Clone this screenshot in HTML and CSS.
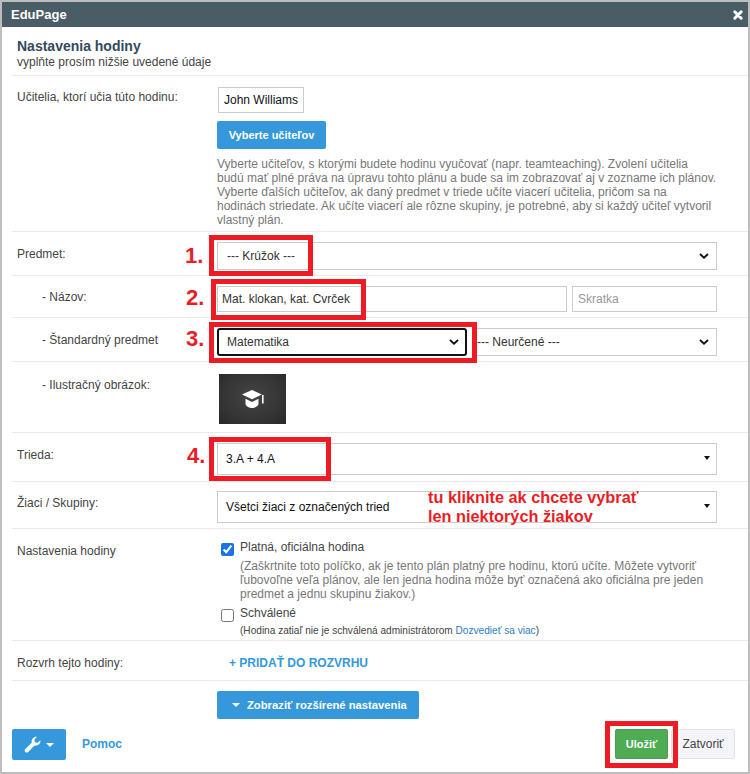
FILE: index.html
```html
<!DOCTYPE html>
<html lang="sk">
<head>
<meta charset="utf-8">
<title>EduPage</title>
<link rel="stylesheet" href="styles.css">
</head>
<body>
<div class="dialog">
  <header class="titlebar">
    <span class="titlebar-name">EduPage</span>
    <svg class="close" viewBox="0 0 10 10" width="10" height="10"><path d="M1.8 1.8 8.2 8.2M8.200 1.800 1.800 8.200" stroke="#fff" stroke-width="3" stroke-linecap="round"/></svg>
  </header>
  <div class="content">
    <div class="heading">
      <h1>Nastavenia hodiny</h1>
      <p>vyplňte prosím nižšie uvedené údaje</p>
    </div>

    <section class="row row-teachers">
      <div class="label">Učitelia, ktorí učia túto hodinu:</div>
      <div class="field">
        <div class="chip">John Williams</div>
        <button class="btn btn-blue btn-teachers" type="button">Vyberte učiteľov</button>
        <p class="hint">Vyberte učiteľov, s ktorými budete hodinu vyučovať (napr. teamteaching). Zvolení učitelia<br>budú mať plné práva na úpravu tohto plánu a bude sa im zobrazovať aj v zozname ich plánov.<br>Vyberte ďalších učiteľov, ak daný predmet v triede učíte viacerí učitelia, pričom sa na<br>hodinách striedate. Ak učíte viacerí ale rôzne skupiny, je potrebné, aby si každý učiteľ vytvoril<br>vlastný plán.</p>
      </div>
    </section>

    <section class="row row-subject">
      <div class="label">Predmet:</div>
      <div class="field">
        <div class="select"><span class="select-text">--- Krúžok ---</span><svg class="chev" viewBox="0 0 10 6"><path d="M1 1l4 3.6L9 1" fill="none" stroke="#111" stroke-width="1.9"/></svg></div>
      </div>
    </section>

    <section class="row row-name">
      <div class="label label-sub">- Názov:</div>
      <div class="field field-pair">
        <div class="input input-name">Mat. klokan, kat. Cvrček</div>
        <div class="input input-short">Skratka</div>
      </div>
    </section>

    <section class="row row-std">
      <div class="label label-sub">- Štandardný predmet</div>
      <div class="field field-pair">
        <div class="select select-focus"><span class="select-text">Matematika</span><svg class="chev" viewBox="0 0 10 6"><path d="M1 1l4 3.6L9 1" fill="none" stroke="#111" stroke-width="1.9"/></svg></div>
        <div class="select select-second"><span class="select-text">--- Neurčené ---</span><svg class="chev" viewBox="0 0 10 6"><path d="M1 1l4 3.6L9 1" fill="none" stroke="#111" stroke-width="1.9"/></svg></div>
      </div>
    </section>

    <section class="row row-image">
      <div class="label label-sub">- Ilustračný obrázok:</div>
      <div class="field">
        <div class="thumb">
          <svg viewBox="0 0 22 18" width="22" height="18"><path d="M10 0 0 4.500l10 4.800 10-4.800z" fill="#fff"/><path d="M3.500 8.800v5.200c0 1.500 3 4 6.500 4s6.500-2.500 6.500-4V8.800L10 12z" fill="#fff"/><path d="M20.800 5v8.500" stroke="#fff" stroke-width="1.600"/></svg>
        </div>
      </div>
    </section>

    <section class="row row-class">
      <div class="label">Trieda:</div>
      <div class="field">
        <div class="select select-tall"><span class="select-text select-text-dark">3.A + 4.A</span><i class="caret"></i></div>
      </div>
    </section>

    <section class="row row-students">
      <div class="label">Žiaci / Skupiny:</div>
      <div class="field">
        <div class="select select-tall"><span class="select-text select-text-dark">Všetci žiaci z označených tried</span><i class="caret"></i></div>
      </div>
    </section>

    <section class="row row-settings">
      <div class="label">Nastavenia hodiny</div>
      <div class="field field-checks">
        <label class="check"><input type="checkbox" checked><span>Platná, oficiálna hodina</span></label>
        <p class="hint hint-check">(Zaškrtnite toto políčko, ak je tento plán platný pre hodinu, ktorú učíte. Môžete vytvoriť<br>ľubovoľne veľa plánov, ale len jedna hodina môže byť označená ako oficiálna pre jeden<br>predmet a jednu skupinu žiakov.)</p>
        <label class="check check-second"><input type="checkbox"><span>Schválené</span></label>
        <p class="note">(Hodina zatiaľ nie je schválená administrátorom <a href="#">Dozvedieť sa viac</a>)</p>
      </div>
    </section>

    <section class="row row-schedule">
      <div class="label">Rozvrh tejto hodiny:</div>
      <div class="field"><a class="add-link" href="#">+ PRIDAŤ DO ROZVRHU</a></div>
    </section>

    <div class="advanced">
      <button class="btn btn-blue btn-advanced" type="button"><i class="caret caret-white"></i>Zobraziť rozšírené nastavenia</button>
    </div>

    <footer class="footer">
      <button class="btn btn-blue btn-tools" type="button" aria-label="Nástroje">
        <svg viewBox="0 0 16 16" width="17" height="17"><path d="M15.400 3.900c.2 1.600-.3 3.100-1.500 4.100-1.100 1-2.600 1.300-4 .9L4 15c-.8.8-2 .8-2.800 0-.8-.8-.8-2 0-2.800L7.300 6.300c-.4-1.400-.1-2.900.9-4C9.300 1.100 10.800.6 12.300.8L9.800 3.300l.5 2.600 2.600.5z" fill="#fff"/></svg>
        <i class="caret caret-white"></i>
      </button>
      <a class="help" href="#">Pomoc</a>
      <div class="footer-right">
        <button class="btn btn-green" type="button">Uložiť</button>
        <button class="btn btn-plain" type="button">Zatvoriť</button>
      </div>
    </footer>
  </div>

  <div class="mark box-1"></div>
  <div class="mark box-2"></div>
  <div class="mark box-3"></div>
  <div class="mark box-4"></div>
  <div class="mark box-5"></div>
  <span class="num num-1">1.</span>
  <span class="num num-2">2.</span>
  <span class="num num-3">3.</span>
  <span class="num num-4">4.</span>
  <div class="annotation">tu kliknite ak chcete vybrať<br>len niektorých žiakov</div>
</div>
</body>
</html>
```
FILE: styles.css
```css
* { box-sizing: border-box; }
html, body { margin: 0; height: 100%; }
body {
  background: #bdbdbd;
  padding: 2px;
  font-family: "Liberation Sans", Arial, sans-serif;
  font-size: 12px;
  color: #444;
  overflow: hidden;
}
.dialog {
  position: relative;
  width: 746px;
  height: 770px;
  background: #fff;
  display: flex;
  flex-direction: column;
}
.titlebar {
  height: 25px;
  flex: none;
  background: #4a5c66;
  color: #fff;
  display: flex;
  align-items: center;
  justify-content: space-between;
  padding: 0 5px 0 9px;
  font-weight: bold;
  font-size: 13px;
}
.close { display: block; }
.content { flex: 1; padding-left: 10px; display: flex; flex-direction: column; }
.heading { height: 49px; padding: 11px 0 0 5px; border-bottom: 1px solid #e9e9e9; }
.heading h1 { margin: 0; font-size: 14px; line-height: 16px; font-weight: bold; color: #34495e; }
.heading p { margin: 1px 0 0; font-size: 12px; line-height: 15px; color: #444; }

.row { display: flex; border-bottom: 1px solid #e9e9e9; }
.label { width: 205px; flex: none; padding-left: 5px; line-height: 14px; }
.label-sub { padding-left: 30px; }
.field { flex: none; width: 500px; }
.field-pair { display: flex; gap: 5px; }

.row-teachers { height: 156px; padding-top: 11px; }
.row-teachers .label { padding-top: 3px; }
.row-subject { height: 44px; padding-top: 10px; }
.row-subject .label { padding-top: 5px; }
.row-name { height: 42px; padding-top: 10px; }
.row-name .label { padding-top: 4px; }
.row-std { height: 44px; padding-top: 10px; }
.row-std .label { padding-top: 5px; }
.row-image { height: 71px; padding-top: 12px; }
.row-image .label { padding-top: 4px; }
.row-class { height: 49px; padding-top: 10px; }
.row-class .label { padding-top: 5px; }
.row-students { height: 47px; padding-top: 9px; }
.row-students .label { padding-top: 5px; }
.row-settings { height: 112px; padding-top: 11px; }
.row-settings .label { padding-top: 4px; }
.row-schedule { height: 40px; padding-top: 15px; }
.row-schedule .label { padding-top: 0; }

.chip {
  width: 86px; height: 26px;
  margin-left: 1px;
  border: 1px solid #ccc;
  color: #111;
  display: flex; align-items: center; justify-content: center;
}
.btn {
  border: 0;
  border-radius: 2px;
  font-family: inherit;
  font-size: 12px;
  font-weight: bold;
  color: #fff;
  padding: 0;
}
.btn-blue { background: #3498db; }
.btn-teachers { display: block; width: 109px; height: 28px; margin-top: 8px; font-size: 11px; }
.hint { margin: 8px 0 0; line-height: 14px; color: #777; font-size: 12px; }

.select {
  position: relative;
  width: 500px;
  height: 28px;
  border: 1px solid #ccc;
  display: flex;
  align-items: center;
  color: #333;
}
.select-text { padding-left: 9px; }
.select-text-dark { color: #111; padding-left: 8px; }
.chev { position: absolute; right: 7px; top: 10px; width: 10px; height: 6px; }
.select-focus { width: 250px; border: 2px solid #111; border-radius: 3px; }
.select-focus .select-text { padding-left: 8px; }
.select-focus .chev { right: 6px; top: 9px; }
.select-second { width: 245px; }
.select-second .select-text { padding-left: 4px; }
.select-tall { height: 32px; }
.caret {
  display: inline-block;
  flex: none;
  width: 0; height: 0;
  border-left: 4px solid transparent;
  border-right: 4px solid transparent;
  border-top: 4px solid #111;
}
.select .caret { position: absolute; right: 6px; top: 12px; border-left-width: 3.5px; border-right-width: 3.5px; }
.caret-white { border-top-color: #fff; }

.input {
  height: 26px;
  border: 1px solid #ccc;
  display: flex;
  align-items: center;
  padding-left: 4px;
  color: #333;
}
.input-name { width: 350px; }
.input-short { width: 145px; padding-left: 5px; color: #999; }

.thumb {
  width: 67px; height: 50px; margin-left: 2px;
  background: radial-gradient(ellipse at 50% 45%, #444 0%, #353535 60%, #292929 100%);
  display: flex; align-items: center; justify-content: center;
}
.thumb svg { display: block; }

.check { display: flex; align-items: flex-start; gap: 6px; line-height: 14px; color: #444; height: 14px; margin-left: 4px; }
.check input { width: 13px; height: 13px; margin: 3px 0 0; flex: none; accent-color: #1a73e8; }
.hint-check { margin: 5px 0 0 23px; }
.check-second { margin-top: 5px; }
.note { margin: 5px 0 0 23px; font-size: 10.1px; line-height: 12px; color: #444; }
.note a { color: #2b7cc0; text-decoration: none; }
.add-link { display: block; margin-left: 12px; font-weight: bold; color: #3498db; text-decoration: none; line-height: 15px; }

.advanced { height: 48px; padding: 10px 0 0 205px; flex: none; }
.btn-advanced { width: 202px; height: 28px; display: flex; align-items: center; gap: 7px; padding-left: 15px; font-size: 11.25px; }
.footer { display: flex; align-items: flex-start; }
.btn-tools { width: 54px; height: 31px; display: flex; align-items: center; justify-content: center; gap: 5px; }
.help { margin-left: 16px; margin-top: 8px; font-weight: bold; color: #3498db; text-decoration: none; line-height: 14px; }
.footer-right { margin-left: auto; display: flex; gap: 3px; padding-right: 13px; }
.btn-green { width: 53px; height: 30px; background: #4fac55; border: 1px solid #47a04d; font-size: 11px; }
.btn-plain { width: 64px; height: 30px; background: #f4f4f9; border: 1px solid #e2e2e2; color: #444; font-weight: normal; }

.mark { position: absolute; border: 5px solid #ed1c24; }
.box-1 { left: 207px; top: 233px; width: 104px; height: 41px; }
.box-2 { left: 209px; top: 277px; width: 155px; height: 41px; }
.box-3 { left: 207px; top: 320px; width: 268px; height: 41px; }
.box-4 { left: 207px; top: 435px; width: 122px; height: 44px; }
.box-5 { left: 603px; top: 719px; width: 73px; height: 47px; }
.num { position: absolute; font-size: 22px; line-height: 26px; font-weight: bold; color: #ed1c24; }
.num-1 { left: 183px; top: 241px; }
.num-2 { left: 184px; top: 283px; }
.num-3 { left: 184px; top: 324px; }
.num-4 { left: 185px; top: 441px; }
.annotation {
  position: absolute; left: 426px; top: 486px;
  font-size: 16.3px; line-height: 19px; font-weight: bold; color: #ed1c24;
}
```
